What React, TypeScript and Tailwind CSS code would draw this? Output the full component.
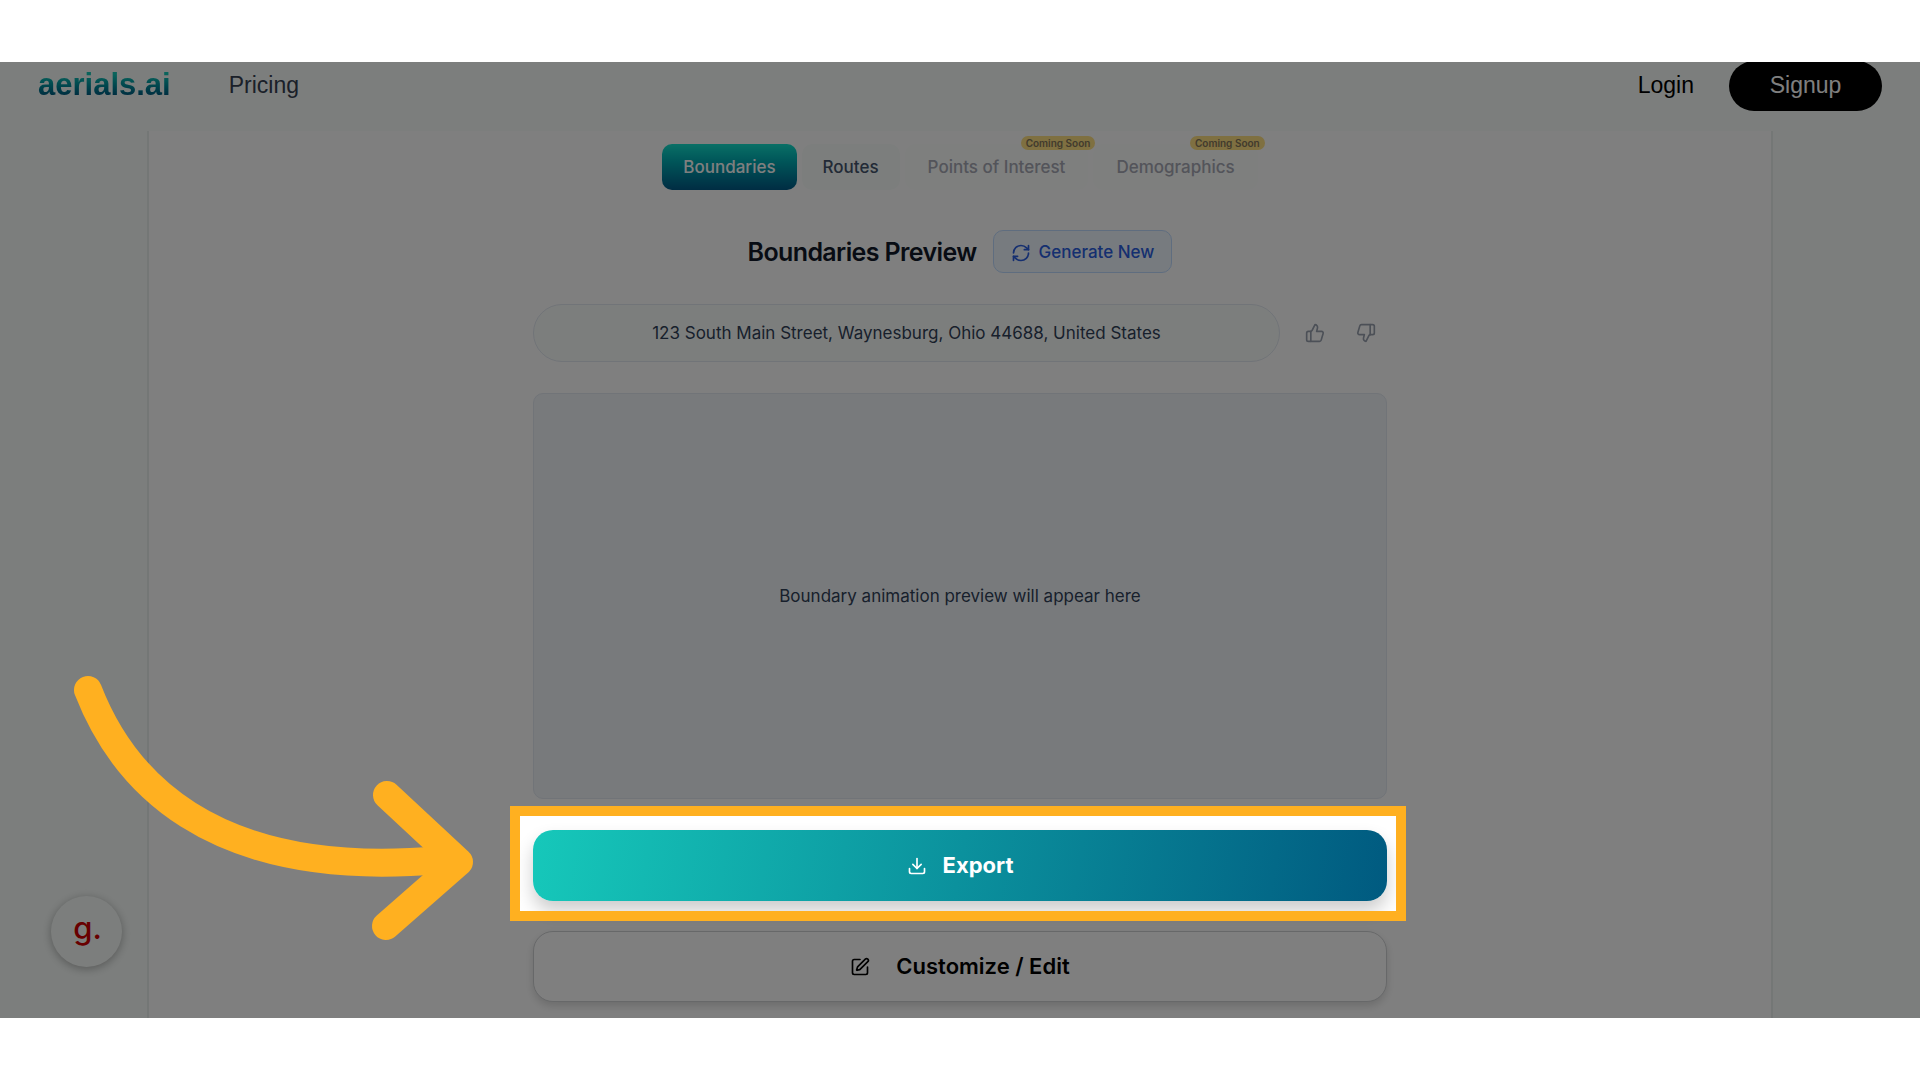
import { Download, RefreshCw, SquarePen, ThumbsDown, ThumbsUp } from "lucide-react";
import { clsx } from "clsx";

const tabs = [
  { label: "Boundaries", active: true },
  { label: "Routes" },
  { label: "Points of Interest", soon: true },
  { label: "Demographics", soon: true },
];

function Header() {
  return (
    <header className="flex h-[69px] items-end justify-between bg-[#f9fdfb] px-[38px] pb-5 font-['Liberation_Sans',sans-serif] text-[23px]">
      <div className="flex h-[50px] items-center gap-[58px] pb-0.5">
        <a href="#" className="bg-linear-to-b from-[#14c8b8] from-20% to-[#005a80] to-80% bg-clip-text text-[31px] leading-9 font-bold text-transparent">
          aerials.ai
        </a>
        <a href="#pricing" className="text-gray-700">Pricing</a>
      </div>
      <nav className="flex h-[50px] items-center gap-[35px]">
        <a href="#login" className="pb-0.5 text-black">Login</a>
        <button className="h-[50px] w-[153px] rounded-full bg-black pb-0.5 text-white">Signup</button>
      </nav>
    </header>
  );
}

function Tabs() {
  return (
    <div className="flex justify-center gap-[5px]">
      {tabs.map((tab) => (
        <button
          key={tab.label}
          disabled={tab.soon}
          className={clsx(
            "relative h-[46px] rounded-[10px] pt-0.5 text-[17px] font-medium",
            tab.active && "bg-linear-to-b from-[#14e0cc] to-[#005a86] text-white",
            !tab.active && !tab.soon && "bg-[#f9fdfb] text-slate-600",
            tab.soon ? "bg-[#fcfefd] px-[23px] text-[#a6a8b4]" : "px-[21px]"
          )}
        >
          {tab.label}
          {tab.soon && (
            <span className="absolute -top-2 -right-[7px] rounded-full bg-[#ffe083] px-[5px] text-[10px] leading-[14px] font-semibold text-[#84765a]">
              Coming Soon
            </span>
          )}
        </button>
      ))}
    </div>
  );
}

function ExportButton() {
  return (
    <div className="relative mt-[31px]">
      <button className="flex h-[71px] w-full items-center justify-center gap-4 rounded-[20px] bg-linear-[100deg] from-[#16c8ba] to-[#005a80] text-[22px] font-bold text-white shadow-[0_10px_18px_rgba(0,0,0,0.2)]">
        <Download className="size-5" />
        Export
      </button>
      {/* spotlight: dims everything outside the highlighted frame */}
      <div className="pointer-events-none absolute -top-6 -right-[19px] -bottom-5 -left-[23px] z-20 border-10 border-[#ffb020] shadow-[0_0_0_3000px_rgba(0,0,0,0.5)]" />
    </div>
  );
}

function Arrow() {
  return (
    <svg
      className="pointer-events-none absolute top-[600px] left-[60px] z-30"
      width="430"
      height="290"
      viewBox="60 662 430 290"
      fill="none"
      stroke="#ffb020"
      strokeWidth="28"
      strokeLinecap="round"
      strokeLinejoin="round"
    >
      <path d="M88 690C121 775 205 881 440 860" />
      <path d="M387 795L459 862L386 926" />
    </svg>
  );
}

export default function App() {
  return (
    <div className="min-h-screen bg-white py-[62px] font-['Inter',sans-serif]">
      <div className="relative overflow-hidden bg-[#f9fdfb]">
        <Header />
        <main className="mx-[147px] border-x-2 border-[#e9eeec] bg-white pt-[13px] pb-4">
          <Tabs />
          <div className="mx-auto max-w-[854px]">
            <div className="mt-10 flex items-center justify-center gap-4">
              <h1 className="pt-0.5 text-[25px] font-semibold tracking-tight text-gray-900">Boundaries Preview</h1>
              <button className="flex h-[43px] items-center gap-2 rounded-[10px] border border-[#bfdbfe] bg-[#eff6ff] px-[17px] pt-0.5 text-[17px] font-medium text-[#2a5fe0]">
                <RefreshCw className="size-5" />
                Generate New
              </button>
            </div>

            <div className="mt-[31px] flex items-center">
              <div className="flex h-[58px] grow items-center justify-center rounded-full border border-slate-200 bg-[#f9fdfb] pt-0.5 text-[17px] text-slate-700">
                123 South Main Street, Waynesburg, Ohio 44688, United States
              </div>
              <div className="flex gap-[31px] pr-[11px] pl-[25px] text-gray-400">
                <button aria-label="Like"><ThumbsUp className="size-5" /></button>
                <button aria-label="Dislike"><ThumbsDown className="size-5" /></button>
              </div>
            </div>

            <div className="mt-[31px] flex h-[406px] items-center justify-center rounded-[10px] border border-slate-200 bg-slate-100 pt-0.5 text-[17px] text-slate-700">
              Boundary animation preview will appear here
            </div>

            <ExportButton />
            <button className="mt-[30px] flex h-[71px] w-full items-center justify-center gap-[26px] rounded-[20px] border border-[#cfd1d3] bg-white text-[22px] font-semibold text-black shadow-[0_4px_8px_rgba(0,0,0,0.15)]">
              <SquarePen className="size-5" />
              Customize / Edit
            </button>
          </div>
        </main>

        <button
          aria-label="Open widget"
          className="absolute bottom-[51px] left-[51px] flex size-[71px] items-center justify-center rounded-full bg-[#f9fdfb] pb-2 pl-0.5 text-[31px] leading-none font-medium text-[#d00000] shadow-[0_2px_10px_rgba(0,0,0,0.3)]"
        >
          g.
        </button>
        <Arrow />
      </div>
    </div>
  );
}
